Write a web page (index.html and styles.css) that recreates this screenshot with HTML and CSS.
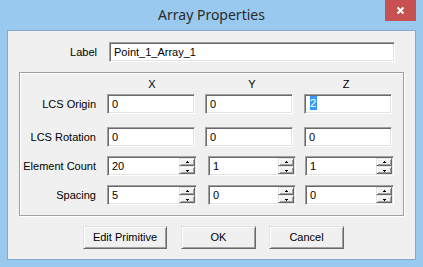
FILE: index.html
```html
<!DOCTYPE html>
<html>
<head>
<meta charset="utf-8">
<title>Array Properties</title>
<link rel="stylesheet" href="styles.css">
</head>
<body>
<div class="window">
  <div class="titlebar">
    <span class="title">Array Properties</span>
    <div class="close">
      <svg width="31" height="21" viewBox="0 0 31 21"><path d="M12.5 7.5 L18.5 13.5 M18.5 7.5 L12.5 13.5" stroke="#fff" stroke-width="2" fill="none"/></svg>
    </div>
  </div>
  <div class="client">
    <div class="label-row">
      <span class="lbl-main">Label</span>
      <div class="edit edit-label">Point_1_Array_1</div>
    </div>
    <div class="group">
      <div class="hdr-row">
        <span class="hdr hx">X</span><span class="hdr hy">Y</span><span class="hdr hz">Z</span>
      </div>
      <div class="row r1">
        <span class="rl">LCS Origin</span>
        <div class="edit ex">0</div>
        <div class="edit ey">0</div>
        <div class="edit ez"><span class="sel">2</span></div>
      </div>
      <div class="row r2">
        <span class="rl">LCS Rotation</span>
        <div class="edit ex">0</div>
        <div class="edit ey">0</div>
        <div class="edit ez">0</div>
      </div>
      <div class="row r3">
        <span class="rl">Element Count</span>
        <div class="edit spin sx"><span class="val">20</span><div class="updown"><div class="ud"><svg width="5" height="3" viewBox="0 0 5 3"><rect x="2" y="0" width="1" height="1"/><rect x="1" y="1" width="3" height="1"/></svg></div><div class="ud"><svg width="5" height="3" viewBox="0 0 5 3"><rect x="1" y="1" width="3" height="1"/><rect x="2" y="2" width="1" height="1"/></svg></div></div></div>
        <div class="edit spin sy"><span class="val">1</span><div class="updown"><div class="ud"><svg width="5" height="3" viewBox="0 0 5 3"><rect x="2" y="0" width="1" height="1"/><rect x="1" y="1" width="3" height="1"/></svg></div><div class="ud"><svg width="5" height="3" viewBox="0 0 5 3"><rect x="1" y="1" width="3" height="1"/><rect x="2" y="2" width="1" height="1"/></svg></div></div></div>
        <div class="edit spin sz"><span class="val">1</span><div class="updown"><div class="ud"><svg width="5" height="3" viewBox="0 0 5 3"><rect x="2" y="0" width="1" height="1"/><rect x="1" y="1" width="3" height="1"/></svg></div><div class="ud"><svg width="5" height="3" viewBox="0 0 5 3"><rect x="1" y="1" width="3" height="1"/><rect x="2" y="2" width="1" height="1"/></svg></div></div></div>
      </div>
      <div class="row r4">
        <span class="rl">Spacing</span>
        <div class="edit spin sx"><span class="val">5</span><div class="updown"><div class="ud"><svg width="5" height="3" viewBox="0 0 5 3"><rect x="2" y="0" width="1" height="1"/><rect x="1" y="1" width="3" height="1"/></svg></div><div class="ud"><svg width="5" height="3" viewBox="0 0 5 3"><rect x="1" y="1" width="3" height="1"/><rect x="2" y="2" width="1" height="1"/></svg></div></div></div>
        <div class="edit spin sy"><span class="val">0</span><div class="updown"><div class="ud"><svg width="5" height="3" viewBox="0 0 5 3"><rect x="2" y="0" width="1" height="1"/><rect x="1" y="1" width="3" height="1"/></svg></div><div class="ud"><svg width="5" height="3" viewBox="0 0 5 3"><rect x="1" y="1" width="3" height="1"/><rect x="2" y="2" width="1" height="1"/></svg></div></div></div>
        <div class="edit spin sz"><span class="val">0</span><div class="updown"><div class="ud"><svg width="5" height="3" viewBox="0 0 5 3"><rect x="2" y="0" width="1" height="1"/><rect x="1" y="1" width="3" height="1"/></svg></div><div class="ud"><svg width="5" height="3" viewBox="0 0 5 3"><rect x="1" y="1" width="3" height="1"/><rect x="2" y="2" width="1" height="1"/></svg></div></div></div>
      </div>
    </div>
    <div class="buttons">
      <div class="btn b-edit">Edit Primitive</div>
      <div class="btn b-ok">OK</div>
      <div class="btn b-cancel">Cancel</div>
    </div>
  </div>
</div>
</body>
</html>
```
FILE: styles.css
```css
* { box-sizing: border-box; }
html, body { margin: 0; padding: 0; background: #99c9ef; }
body {
  font-family: "Liberation Sans", Arial, sans-serif;
  font-size: 11px;
  color: #000;
}
.window {
  width: 423px;
  height: 267px;
  background: #99c9ef;
  display: flex;
  flex-direction: column;
}
.titlebar {
  height: 30px;
  position: relative;
  text-align: center;
  font-family: "Noto Sans", "Open Sans", sans-serif;
  font-size: 14px;
  line-height: 30px;
  color: #2b2b2b;
}
.close {
  position: absolute;
  top: 0;
  right: 7px;
  width: 31px;
  height: 21px;
  background: #c75050;
}
.close svg { display: block; }
.client {
  flex: 1;
  margin: 0 7px 7px 7px;
  border: 1px solid #83a9cc;
  background: #f0f0f0;
  padding-top: 11px;
}
.label-row {
  display: flex;
  height: 20px;
}
.lbl-main {
  width: 89px;
  text-align: right;
  line-height: 20px;
}
.edit {
  height: 20px;
  background: #fff;
  border: 1px solid;
  border-color: #a0a0a0 #fff #fff #a0a0a0;
  box-shadow: inset 1px 1px #696969, inset -1px -1px #e3e3e3;
  padding-left: 4px;
  line-height: 18px;
  white-space: nowrap;
}
.edit-label {
  margin-left: 12px;
  width: 286px;
}
.group {
  margin: 10px 0 0 11px;
  width: 385px;
  height: 144px;
  border: 1px solid #a0a0a0;
  box-shadow: inset 1px 1px #fff, 1px 1px #fff;
}
.hdr-row {
  display: flex;
  height: 21px;
  padding-top: 5px;
  line-height: 13px;
}
.hdr { width: 20px; text-align: center; }
.hx { margin-left: 122px; }
.hy { margin-left: 80px; }
.hz { margin-left: 74px; }
.row {
  display: flex;
  height: 20px;
}
.r2 { margin-top: 13px; }
.r3, .r4 { margin-top: 9px; }
.rl {
  width: 76px;
  margin-right: 11px;
  text-align: right;
  line-height: 20px;
  white-space: nowrap;
}
.ex { width: 88px; }
.ey { width: 88px; margin-left: 10px; }
.ez { width: 88px; margin-left: 11px; }
.sx { width: 90px; }
.sy { width: 88px; margin-left: 11px; }
.sz { width: 89px; margin-left: 9px; }
.sel {
  display: inline-block;
  margin-left: 1px;
  width: 7px;
  height: 14px;
  line-height: 14px;
  background: #3399ff;
  color: #fff;
  vertical-align: 1px;
}
.spin {
  display: flex;
  padding: 1px 1px 1px 4px;
  line-height: 16px;
}
.updown {
  margin-left: auto;
  width: 16px;
  height: 16px;
  display: flex;
  flex-direction: column;
}
.ud {
  height: 8px;
  background: #f0f0f0;
  border: 1px solid;
  border-color: #e3e3e3 #696969 #696969 #e3e3e3;
  box-shadow: inset 1px 1px #fff, inset -1px -1px #a0a0a0;
  display: flex;
  align-items: center;
  justify-content: center;
}
.ud svg { display: block; fill: #000; }
.buttons {
  display: flex;
  margin-top: 10px;
  padding-left: 75px;
}
.btn {
  height: 23px;
  border: 1px solid;
  border-color: #e3e3e3 #696969 #696969 #e3e3e3;
  box-shadow: inset 1px 1px #fff, inset -1px -1px #a0a0a0;
  background: #f0f0f0;
  text-align: center;
  line-height: 21px;
}
.b-edit { width: 84px; }
.b-ok { width: 75px; margin-left: 14px; }
.b-cancel { width: 75px; margin-left: 13px; }
```
